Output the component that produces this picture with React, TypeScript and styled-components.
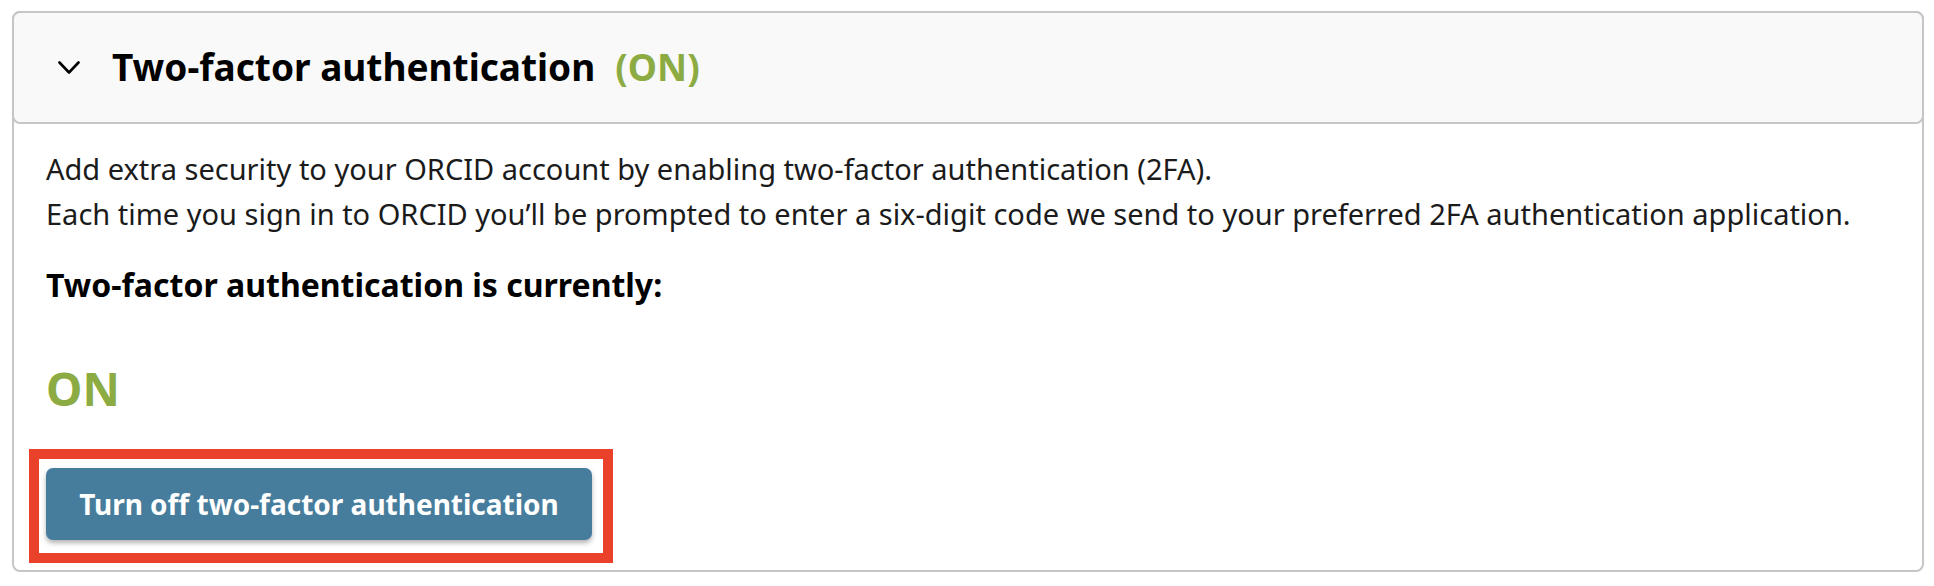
import React from "react";
import styled, { createGlobalStyle } from "styled-components";

const GlobalStyle = createGlobalStyle`
  body {
    margin: 0;
    background: #ffffff;
    font-family: "Noto Sans", "Open Sans", sans-serif;
    color: #1b1b1b;
  }
`;

const Page = styled.div`
  padding: 11px 10px 0 12px;
`;

const Card = styled.section`
  border: 2px solid #c6c6c6;
  border-radius: 8px;
  background: #ffffff;
`;

const Header = styled.div`
  margin: -2px -2px 0;
  height: 113px;
  box-sizing: border-box;
  display: flex;
  align-items: center;
  gap: 32px;
  padding-left: 44px;
  border: 2px solid #c6c6c6;
  border-radius: 8px;
  background: #f9f9f9;
`;

const Chevron = styled.svg`
  width: 22px;
  height: 14px;
  flex: none;
`;

const Title = styled.h2`
  margin: 0;
  font-size: 37px;
  font-weight: 700;
  color: #000000;
  line-height: 1.2;
`;

const Status = styled.span`
  color: #8cab42;
  font-weight: 700;
`;

const TitleStatus = styled(Status)`
  margin-left: 20px;
`;

const Body = styled.div`
  padding: 22px 32px 7px;
`;

const Intro = styled.p`
  margin: 0;
  font-size: 29px;
  line-height: 45px;
  color: #1b1b1b;
`;

const SubHeading = styled.h3`
  margin: 25px 0 0;
  font-size: 32px;
  line-height: 48px;
  font-weight: 700;
  color: #000000;
`;

const BigStatus = styled.div`
  margin-top: 44px;
  font-size: 46px;
  line-height: 70px;
  font-weight: 700;
  color: #8cab42;
`;

/* red annotation frame drawn around the action button */
const Highlight = styled.div`
  margin: 26px 0 0 -17px;
  display: inline-block;
  border: 10px solid #e9412a;
  padding: 9px 11px 13px 7px;
  background: #ffffff;
`;

const Button = styled.button`
  display: block;
  width: 546px;
  height: 72px;
  border: none;
  border-radius: 7px;
  background: #477d9c;
  color: #ffffff;
  font-family: "Noto Sans", "Open Sans", sans-serif;
  font-size: 28px;
  font-weight: 700;
  box-shadow: 0 3px 5px rgba(0, 0, 0, 0.3);
  cursor: pointer;
`;

export default function App() {
  return (
    <>
      <GlobalStyle />
      <Page>
        <Card>
          <Header>
            <Chevron viewBox="0 0 22 14" fill="none">
              <polyline
                points="1.5,1.5 11,11.5 20.5,1.5"
                stroke="#000"
                strokeWidth="2.6"
                strokeLinecap="round"
                strokeLinejoin="round"
              />
            </Chevron>
            <Title>
              Two-factor authentication
              <TitleStatus>(ON)</TitleStatus>
            </Title>
          </Header>
          <Body>
            <Intro>
              Add extra security to your ORCID account by enabling two-factor authentication (2FA).
              <br />
              Each time you sign in to ORCID you’ll be prompted to enter a six-digit code we send to
              your preferred 2FA authentication application.
            </Intro>
            <SubHeading>Two-factor authentication is currently:</SubHeading>
            <BigStatus>ON</BigStatus>
            <Highlight>
              <Button type="button">Turn off two-factor authentication</Button>
            </Highlight>
          </Body>
        </Card>
      </Page>
    </>
  );
}
